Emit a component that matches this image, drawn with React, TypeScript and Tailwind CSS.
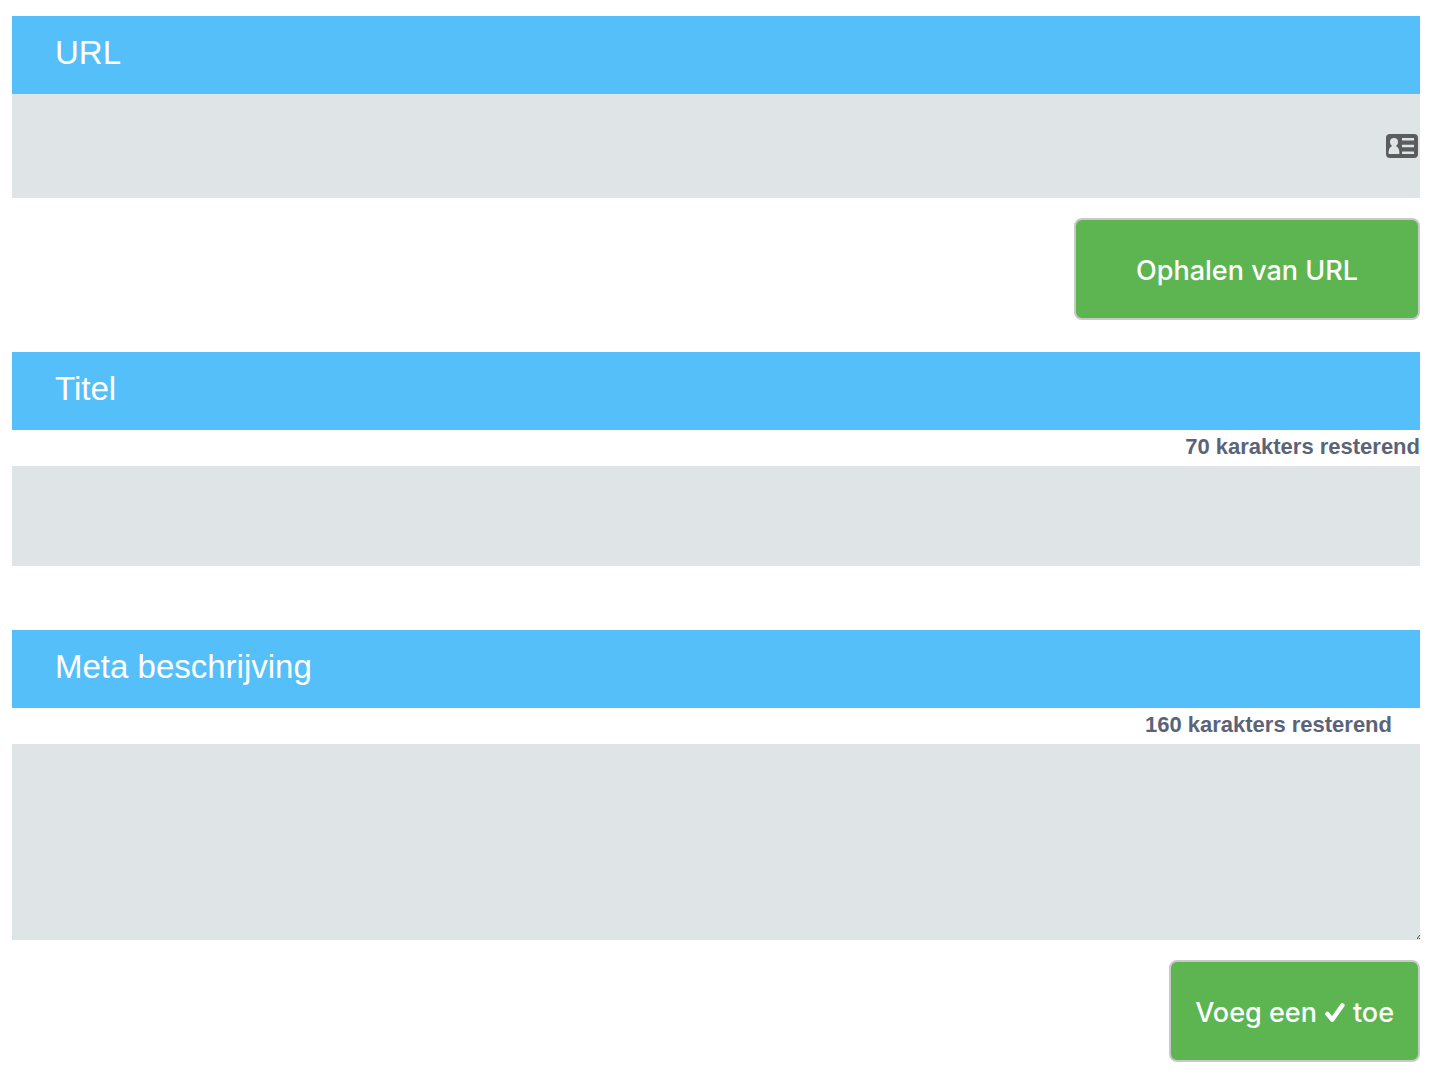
import React, { useState } from "react";

const TITLE_MAX = 70;
const META_MAX = 160;

// ─── Icons ──────────────────────────────────────────────────────────────────

const ContactCardIcon: React.FC = () => (
  <svg className="h-6 w-8" viewBox="0 0 32 24" aria-hidden="true">
    <rect width="32" height="24" rx="4" fill="#5a5c5e" />
    <circle cx="8" cy="8" r="4" fill="#dfe4e6" />
    <path d="M2.6 20c0-4 .4-6.500 3-7.500l.4-2h4l.4 2c2.600 1 3 3.500 3 7.500z" fill="#dfe4e6" />
    <path d="M16 5.200h12M16 12h12M16 18.800h12" stroke="#dfe4e6" strokeWidth="2.400" />
  </svg>
);

const CheckIcon: React.FC = () => (
  <svg className="mx-2 h-5 w-5" viewBox="0 0 20 20" aria-hidden="true">
    <path
      d="M2.400 10.900L7.200 16.700L17.400 2.300"
      fill="none"
      stroke="white"
      strokeWidth="4.400"
      strokeLinecap="round"
      strokeLinejoin="round"
    />
  </svg>
);

const ResizeGrip: React.FC = () => (
  <svg className="absolute right-0 bottom-px h-1 w-[3px]" viewBox="0 0 3 4" aria-hidden="true">
    <path d="M0 4V2.600h1V1.300h1V0h1v1.300H2v1.300H1V4zM2 4V3h1v1z" fill="#4a4d50" />
  </svg>
);

// ─── Form parts ─────────────────────────────────────────────────────────────

const FieldLabel: React.FC<{ htmlFor: string; children: React.ReactNode }> = ({ htmlFor, children }) => (
  <label
    htmlFor={htmlFor}
    className="block bg-[#55bffa] px-[43px] pt-4 pb-5 text-[33px] leading-[42px] text-white"
  >
    {children}
  </label>
);

const ActionButton: React.FC<{ className: string; children: React.ReactNode }> = ({ className, children }) => (
  <button
    type="button"
    className={`mt-5 flex items-center justify-center self-end rounded-lg border-2 border-[#c9c9c9] bg-[#5cb551] pt-[33px] pb-[29px] font-[Inter,sans-serif] text-[27px] leading-9 font-medium text-white ${className}`}
  >
    {children}
  </button>
);

// ─── Page ───────────────────────────────────────────────────────────────────

export default function App() {
  const [title, setTitle] = useState("");
  const [meta, setMeta] = useState("");

  return (
    <form className="flex flex-col bg-white px-3 pt-4 pb-3 font-['Liberation_Sans',sans-serif]">
      <FieldLabel htmlFor="url">URL</FieldLabel>
      <div className="relative">
        <input id="url" type="text" className="block h-[104px] w-full bg-[#dfe4e6] pr-12 pl-11 text-[27px] outline-none" />
        <span className="absolute inset-y-0 right-0.5 flex items-center">
          <ContactCardIcon />
        </span>
      </div>
      <ActionButton className="px-[60px]">Ophalen van URL</ActionButton>

      <div className="mt-8">
        <FieldLabel htmlFor="title">Titel</FieldLabel>
        <p className="h-9 text-right text-[22px] leading-[34px] font-bold text-[#5a6377]">
          {TITLE_MAX - title.length} karakters resterend
        </p>
        <input
          id="title"
          type="text"
          maxLength={TITLE_MAX}
          value={title}
          onChange={(e) => setTitle(e.target.value)}
          className="block h-[100px] w-full bg-[#dfe4e6] px-11 text-[27px] outline-none"
        />
      </div>

      <div className="mt-16">
        <FieldLabel htmlFor="meta">Meta beschrijving</FieldLabel>
        <p className="h-9 pr-7 text-right text-[22px] leading-[34px] font-bold text-[#5a6377]">
          {META_MAX - meta.length} karakters resterend
        </p>
        <div className="relative">
          <textarea
            id="meta"
            maxLength={META_MAX}
            value={meta}
            onChange={(e) => setMeta(e.target.value)}
            className="block h-[196px] w-full resize-none bg-[#dfe4e6] px-11 py-4 text-[27px] outline-none"
          />
          <ResizeGrip />
        </div>
      </div>
      <ActionButton className="px-6">
        Voeg een
        <CheckIcon />
        toe
      </ActionButton>
    </form>
  );
}
